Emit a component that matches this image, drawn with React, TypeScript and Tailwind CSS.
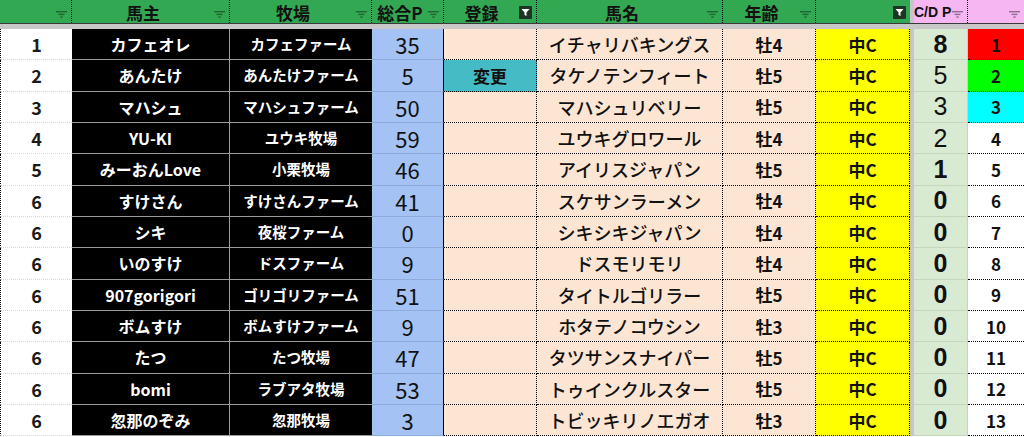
import React from 'react'

type Row = {
  rank: string
  owner: string
  farm: string
  pts: string
  reg: string
  horse: string
  age: string
  cls: string
  cd: string
  cdBold: boolean
  no: string
  noBg: string
}

const rows: Row[] = [
  { rank: '1', owner: 'カフェオレ', farm: 'カフェファーム', pts: '35', reg: '', horse: 'イチャリバキングス', age: '牡4', cls: '中C', cd: '8', cdBold: true, no: '1', noBg: 'bg-[#ff0000]' },
  { rank: '2', owner: 'あんたけ', farm: 'あんたけファーム', pts: '5', reg: '変更', horse: 'タケノテンフィート', age: '牡5', cls: '中C', cd: '5', cdBold: false, no: '2', noBg: 'bg-[#00ff00]' },
  { rank: '3', owner: 'マハシュ', farm: 'マハシュファーム', pts: '50', reg: '', horse: 'マハシュリベリー', age: '牡5', cls: '中C', cd: '3', cdBold: false, no: '3', noBg: 'bg-[#00ffff]' },
  { rank: '4', owner: 'YU-KI', farm: 'ユウキ牧場', pts: '59', reg: '', horse: 'ユウキグロワール', age: '牡4', cls: '中C', cd: '2', cdBold: false, no: '4', noBg: 'bg-white' },
  { rank: '5', owner: 'みーおんLove', farm: '小栗牧場', pts: '46', reg: '', horse: 'アイリスジャパン', age: '牡5', cls: '中C', cd: '1', cdBold: true, no: '5', noBg: 'bg-white' },
  { rank: '6', owner: 'すけさん', farm: 'すけさんファーム', pts: '41', reg: '', horse: 'スケサンラーメン', age: '牡4', cls: '中C', cd: '0', cdBold: true, no: '6', noBg: 'bg-white' },
  { rank: '6', owner: 'シキ', farm: '夜桜ファーム', pts: '0', reg: '', horse: 'シキシキジャパン', age: '牡4', cls: '中C', cd: '0', cdBold: true, no: '7', noBg: 'bg-white' },
  { rank: '6', owner: 'いのすけ', farm: 'ドスファーム', pts: '9', reg: '', horse: 'ドスモリモリ', age: '牡4', cls: '中C', cd: '0', cdBold: true, no: '8', noBg: 'bg-white' },
  { rank: '6', owner: '907gorigori', farm: 'ゴリゴリファーム', pts: '51', reg: '', horse: 'タイトルゴリラー', age: '牡5', cls: '中C', cd: '0', cdBold: true, no: '9', noBg: 'bg-white' },
  { rank: '6', owner: 'ボムすけ', farm: 'ボムすけファーム', pts: '9', reg: '', horse: 'ホタテノコウシン', age: '牡3', cls: '中C', cd: '0', cdBold: true, no: '10', noBg: 'bg-white' },
  { rank: '6', owner: 'たつ', farm: 'たつ牧場', pts: '47', reg: '', horse: 'タツサンスナイパー', age: '牡5', cls: '中C', cd: '0', cdBold: true, no: '11', noBg: 'bg-white' },
  { rank: '6', owner: 'bomi', farm: 'ラブアタ牧場', pts: '53', reg: '', horse: 'トゥインクルスター', age: '牡5', cls: '中C', cd: '0', cdBold: true, no: '12', noBg: 'bg-white' },
  { rank: '6', owner: '忽那のぞみ', farm: '忽那牧場', pts: '3', reg: '', horse: 'トビッキリノエガオ', age: '牡3', cls: '中C', cd: '0', cdBold: true, no: '13', noBg: 'bg-white' },
]

const cols =
  'grid grid-cols-[72px_158px_142px_72px_93px_186px_93px_94px_4px_54px_56px]'

// small grey filter button of an unfiltered column
function FilterIcon() {
  return (
    <svg width="11" height="7" viewBox="0 0 11 7" className="mr-[4px] mb-[5px] shrink-0 self-end">
      <g fill="black" fillOpacity="0.4">
        <rect x="0" y="0" width="11" height="1.4" />
        <rect x="2.5" y="2.7" width="6" height="1.4" />
        <rect x="4.3" y="5.4" width="2.4" height="1.4" />
      </g>
    </svg>
  )
}

// dark filter button of a filtered column
function ActiveFilter() {
  return (
    <div className="mr-[4px] mt-[2px] flex h-[13px] w-[13px] shrink-0 items-center justify-center rounded-[1px] bg-[#1d3523]">
      <svg width="9" height="9" viewBox="0 0 9 9">
        <path d="M0.5 1h8L5.5 4.6V8L3.5 7V4.6z" fill="white" />
      </svg>
    </div>
  )
}

function Head({ label, active, cls = '' }: { label?: string; active?: boolean; cls?: string }) {
  return (
    <div className={`flex h-full items-center border-r border-dotted border-black ${cls}`}>
      <span className="flex-1 text-center text-[17px] font-bold text-[#111] leading-none pt-[1px]">{label}</span>
      {active ? <ActiveFilter /> : <FilterIcon />}
    </div>
  )
}

export default function App() {
  const dot = 'border-b border-r border-dotted border-black'
  return (
    <div className="h-[437px] w-[1024px] overflow-hidden bg-white font-['Noto_Sans_CJK_JP','Noto_Sans',sans-serif]">
      {/* header row */}
      <div className={`${cols} h-[24px] border-b border-[#3a3a3a]`}>
        <Head cls="bg-[#33a852]" />
        <Head label="馬主" cls="bg-[#33a852]" />
        <Head label="牧場" cls="bg-[#33a852]" />
        <Head label="総合P" cls="bg-[#33a852]" />
        <Head label="登録" active cls="bg-[#33a852]" />
        <Head label="馬名" cls="bg-[#33a852]" />
        <Head label="年齢" cls="bg-[#33a852]" />
        <Head active cls="bg-[#33a852] border-r-0" />
        <div className="bg-[#c6c6c6]" />
        <div className="flex h-full items-center border-r border-dotted border-black bg-[#f5b6f1]">
          <span className="whitespace-nowrap font-['Liberation_Sans',sans-serif] text-[14px] font-bold leading-none text-[#111]">C/D P</span>
          <span className="flex-1" />
          <FilterIcon />
        </div>
        <div className="flex h-full items-center bg-[#f5b6f1]">
          <span className="flex-1" />
          <FilterIcon />
        </div>
      </div>
      <div className="h-[5px] bg-[#c8c8c8]" />

      {/* body rows */}
      {rows.map((r, i) => (
        <div key={i} className={`${cols} h-[31.33px] leading-none`}>
          <div className="flex items-center justify-center border-b border-l border-dotted border-l-black border-b-[#d9d9d9] border-b-solid text-[18px] font-bold text-[#1a1a1a]">
            {r.rank}
          </div>
          <div className="flex items-center justify-center border-b border-r border-[#9c9c9c] bg-black text-[16px] font-bold text-white">
            {r.owner}
          </div>
          <div className="flex items-center justify-center border-b border-[#9c9c9c] bg-black text-[14.5px] font-bold text-white">
            {r.farm}
          </div>
          <div className="flex items-center justify-center border-b border-r border-b-[#8eabdc] border-r-black border-r-dotted bg-[#a4c2f4] text-[22px] text-[#111]">
            {r.pts}
          </div>
          <div className={`flex items-center justify-center ${dot} ${r.reg ? 'bg-[#45bcc5]' : 'bg-[#fce5d3]'} text-[17px] font-bold text-[#111]`}>
            {r.reg}
          </div>
          <div className={`flex items-center justify-center ${dot} bg-[#fce5d3] text-[18px] font-medium text-[#111]`}>
            {r.horse}
          </div>
          <div className={`flex items-center justify-center ${dot} bg-[#fce5d3] text-[17px] font-bold text-[#111]`}>
            {r.age}
          </div>
          <div className={`flex items-center justify-center ${dot} bg-[#ffff00] text-[17px] font-bold text-[#111]`}>
            {r.cls}
          </div>
          <div className="bg-[#c6c6c6]" />
          <div
            className={`flex items-center justify-center border-r border-b border-[#c5d6bd] bg-[#d9ead3] font-['Liberation_Sans',sans-serif] text-[25px] text-[#111] ${r.cdBold ? 'font-bold' : 'font-normal'}`}
          >
            {r.cd}
          </div>
          <div className={`flex items-center justify-center border-b border-dotted border-black ${r.noBg} text-[17px] font-semibold text-[#111]`}>
            {r.no}
          </div>
        </div>
      ))}
    </div>
  )
}
